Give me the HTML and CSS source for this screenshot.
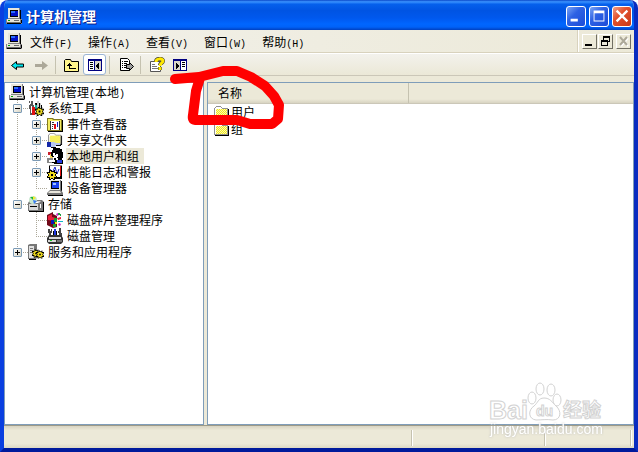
FILE: index.html
```html
<!DOCTYPE html>
<html lang="zh-CN">
<head>
	<meta charset="utf-8">
	<title>计算机管理</title>
	<link rel="stylesheet" href="styles.css">
</head>
<body>
	<!-- icons used more than once -->
	<svg class="defs" aria-hidden="true">
		<symbol id="computer" viewBox="0 0 16 16">
			<path fill="#848284" d="M2 0h12v11H2zM0 11h16v5H0z"/>
			<path fill="#e8e6dc" d="M2 0h11v10H2zM1 11h13v3H1z"/>
			<path fill="#000" d="M4 2h8v7H4zM14 2h1v9h-1zM1 15h14v1H1zM15 12h1v3h-1z"/>
			<path fill="#0010c8" d="M5 3h7v5H5z"/>
			<path fill="#2a6cff" d="M5 3h4v2H5z"/>
			<path fill="#6b6b6b" d="M8 12h5v1H8zM1 14h13v1H1z"/>
			<path fill="#00a000" d="M2 12h2v1H2z"/>
		</symbol>
		<symbol id="folder" viewBox="0 0 16 16">
			<path fill="#909090" d="M0 4h1V3h1V2h5v1h1v1h6v10H0z"/>
			<path fill="#000" d="M14 5h1v10H1v-1h13z"/>
			<path fill="#fff" d="M2 3h5v1h1v1h5v1H2v7H1V4h1z"/>
			<path fill="#f2ea1c" d="M2 5h11v8H2z"/>
			<path fill="none" stroke="#fdf9b0" stroke-dasharray="1 1" d="M2 5.500h11M3 6.500h10M2 7.500h11M3 8.500h10M2 9.500h11M3 10.500h10M2 11.500h11M3 12.500h10"/>
		</symbol>
		<symbol id="gear" viewBox="0 0 10 10">
			<path fill="#000" d="M3 0h2v1h2V0h1v2h2v2H9v2h1v2H8v2H6V9H4v1H2V8H0V6h1V4H0V2h2V1h1z"/>
			<path fill="#f0dc20" d="M3 1h1v1h3V1v2h2v1H8v2h1v1H7v2H6V8H4v1H3V7H1V6h1V4H1V3h2z"/>
			<path fill="#000" d="M4 4h2v2H4z"/>
		</symbol>
	</svg>

	<div class="window">
		<header class="titlebar">
			<svg class="icon"><use href="#computer"/></svg>
			<h1>计算机管理</h1>
			<button class="win" aria-label="最小化"><svg viewBox="0 0 20 20"><path fill="#fff" d="M4 13h8v3H4z"/></svg></button>
			<button class="win" aria-label="最大化"><svg viewBox="0 0 20 20"><path fill="#fff" fill-rule="evenodd" d="M4 4h12v12H4zM5 7v8h10V7z"/></svg></button>
			<button class="win close" aria-label="关闭"><svg viewBox="0 0 20 20"><path stroke="#fff" stroke-width="2.500" d="M4 4l12 12M16 4L4 16"/></svg></button>
		</header>

		<nav class="menubar">
			<svg class="icon"><use href="#computer"/></svg>
			<button>文件<span>(F)</span></button>
			<button>操作<span>(A)</span></button>
			<button>查看<span>(V)</span></button>
			<button>窗口<span>(W)</span></button>
			<button>帮助<span>(H)</span></button>
			<div class="mdi">
				<button aria-label="最小化子窗口"><svg viewBox="0 0 12 12"><path d="M2 9h7v2H2z"/></svg></button>
				<button aria-label="还原子窗口"><svg viewBox="0 0 12 12"><path fill-rule="evenodd" d="M4 1h7v6H9v4H2V5h2zM5 3v2h4v1h1V3zM3 7v3h5V7z"/></svg></button>
				<button class="off" aria-label="关闭子窗口" disabled><svg viewBox="0 0 12 12"><path stroke="#fff" stroke-width="2" d="M4 3l7 8M11 3l-7 8"/><path stroke="#aca899" stroke-width="2" d="M3 2l7 8M10 2l-7 8"/></svg></button>
			</div>
		</nav>

		<div class="toolbar">
			<button aria-label="后退"><svg class="icon" viewBox="0 0 16 16"><path fill="#00e8f0" stroke="#000" d="M1.500 8.500l5-4v2.500h7v3h-7v2.500z"/></svg></button>
			<button aria-label="前进" disabled><svg class="icon" viewBox="0 0 16 16"><path fill="#aca899" d="M15 8.500L9 4v3H2v3h7v3z"/></svg></button>
			<i class="sep"></i>
			<button aria-label="上移一级"><svg class="icon" viewBox="0 0 16 16"><path fill="#fff58c" stroke="#000" d="M.500 14.500v-11l1-1h5l1 2h7v10z"/><path fill="#000" d="M5 6h1v1h1v1h1v1H6v2h6v1H5V9H3V8h1V7h1z"/></svg></button>
			<button class="pressed" aria-label="显示/隐藏控制台树"><svg class="icon" viewBox="0 0 16 16"><path fill="#000080" d="M1 2h14v12H1z"/><path fill="#fff" d="M2 4h5v9H2z"/><path fill="#d8d4c8" d="M8 4h6v9H8z"/><path fill="#000" d="M3 5h3v1H3zM3 7h3v1H3zM3 9h3v1H3zM3 11h3v1H3zM12 5v7H11v-1h-1v-1H9V8h1V7h1V6h1z"/></svg></button>
			<i class="sep"></i>
			<button aria-label="导出列表"><svg class="icon" viewBox="0 0 16 16"><path fill="#fff" stroke="#000" d="M2.500 1.500h7l2 2v10h-9z"/><path fill="#000" d="M4 4h1v1H4zM6 4h4v1H6zM4 6h1v1H4zM6 6h3v1H6zM4 8h1v1H4zM6 8h3v1H6zM4 10h1v1H4zM6 10h3v1H6z"/><path fill="#9c9c9c" stroke="#000" d="M8.500 7.500h3v-2l4 4-4 4v-2h-3z"/></svg></button>
			<i class="sep"></i>
			<button aria-label="帮助"><svg class="icon" viewBox="0 0 16 16"><path fill="#fff" stroke="#555" d="M1.500 4.500h10v10h-10z"/><path fill="#777" d="M3 7h3v1H3zM3 9h5v1H3zM3 11h6v1H3z"/><path fill="none" stroke="#333" stroke-width="4" d="M7 5c0-4 7-4 7-1 0 2-3 2-3 4M11 10v3"/><path fill="none" stroke="#ffe800" stroke-width="3" d="M7 5c0-4 7-4 7-1 0 2-3 2-3 5M11 10v3"/></svg></button>
			<button aria-label="显示/隐藏操作窗格"><svg class="icon" viewBox="0 0 16 16"><path fill="#000080" d="M1 2h14v12H1z"/><path fill="#fff" d="M9 4h5v9H9z"/><path fill="#d8d4c8" d="M2 4h6v9H2z"/><path fill="#000" d="M10 5h3v1h-3zM10 7h3v1h-3zM10 9h3v1h-3zM4 5v7h1v-1h1v-1h1V8H6V7H5V6H4z"/></svg></button>
		</div>

		<main class="panes">
			<section class="pane tree">
				<div class="row">
					<svg class="icon"><use href="#computer"/></svg>
					<span class="label">计算机管理<span class="half">(</span>本地<span class="half">)</span></span>
				</div>
				<div class="row">
					<i class="guide node"><button class="toggle minus" aria-label="折叠"></button></i>
					<svg class="icon" viewBox="0 0 16 16"><path fill="#555" d="M1 1h4v4h1v4H5v6H2V9H1V5h1V3H1z"/><path fill="#fff" d="M2 1h1v3H2zM3 6h1v7H3z"/><path fill="#e01010" d="M4 7h3v8H4z"/><path fill="#000" d="M7 3h5v2h2v4h-1v2H8z"/><path fill="#18b0a0" d="M7 5h3v6H7z"/><path fill="#ccc" d="M9 1h2v7H9zM12 3h1v5h-1z"/><use href="#gear" x="7" y="7" width="9" height="9"/></svg>
					<span class="label">系统工具</span>
				</div>
				<div class="row">
					<i class="guide"></i><i class="guide node"><button class="toggle plus" aria-label="展开"></button></i>
					<svg class="icon" viewBox="0 0 16 16"><path fill="#857c20" d="M0 2h6l1 1h8v12H0z"/><path fill="#f4ec60" d="M1 3h4l1 1h8v10H1z"/><path fill="#000" d="M15 4h1v12H1v-1h14z"/><path fill="#fff" d="M4 5h8v9H4z"/><path fill="#333" d="M3 5h1v9H3zM5 6h2v1H5zM5 8h2v1H5zM5 10h1v1H5zM5 12h1v1H5zM12 5h1v9h-1z"/><path fill="#e01010" d="M7 8h2v5H7z"/><path fill="#1020c8" d="M10 6h1v5h-1z"/></svg>
					<span class="label">事件查看器</span>
				</div>
				<div class="row">
					<i class="guide"></i><i class="guide node"><button class="toggle plus" aria-label="展开"></button></i>
					<svg class="icon" viewBox="0 0 16 16"><use href="#folder" x="1" y="-1" width="15" height="15"/><path fill="#1428a8" d="M0 10h4v5H0z"/><path fill="#b8c8f0" d="M4 10h3l2 1h4v2H9l-1 2H4z"/><path fill="#000" d="M4 15h5v1H4zM9 13h5v1H9z"/></svg>
					<span class="label">共享文件夹</span>
				</div>
				<div class="row selected">
					<i class="guide"></i><i class="guide node"><button class="toggle plus" aria-label="展开"></button></i>
					<svg class="icon" viewBox="0 0 16 16"><path fill="#888" d="M0 10h6v5H0z"/><path fill="#c8202c" d="M1 4h3v3H1z"/><path fill="#f4d858" d="M3 6h3v4H3z"/><path fill="#000" d="M6 0h7v1h2v3h1v6h-1v2h1v4H7v-1H5v-2h2V9H5V8H4V4h1V2h1z"/><path fill="#fff" d="M6 5h2v1h3v3h-1v1H7V8H6z"/><path fill="#000" d="M8 6h1v1H8z"/><path fill="#2038e0" d="M10 12h5v3h-5z"/><path fill="#fff" d="M2 12h6v2H2zM9 10h2v2H9z"/></svg>
					<span class="label">本地用户和组</span>
				</div>
				<div class="row">
					<i class="guide"></i><i class="guide node"><button class="toggle plus" aria-label="展开"></button></i>
					<svg class="icon" viewBox="0 0 16 16"><path fill="#000" d="M2 1h13v14H2z"/><path fill="#fff" d="M3 2h10v11H3z"/><path fill="none" stroke="#1020c8" d="M3 5l2 4 3-6 2 7 2-5"/><path fill="#e01010" d="M13 2h1v10h-1z"/><path fill="#888" d="M2 1h13v1H2z"/><use href="#gear" x="0" y="6" width="10" height="10"/></svg>
					<span class="label">性能日志和警报</span>
				</div>
				<div class="row">
					<i class="guide"></i><i class="guide node last"></i>
					<svg class="icon" viewBox="0 0 16 16"><path fill="#777" d="M3 0h11v11H3z"/><path fill="#e8e6dc" d="M3 0h10v10H3z"/><path fill="#000" d="M4 1h8v8H4zM14 1h1v10h-1z"/><path fill="#1840f0" d="M5 2h7v6H5z"/><path fill="#9cc0ff" d="M6 3h3v2H6z"/><path fill="#777" d="M0 13l3-3h11l2 3v2H0z"/><path fill="#e8e6dc" d="M3 11h10l1 2H1z"/><path fill="#000" d="M1 15h15v1H1z"/></svg>
					<span class="label">设备管理器</span>
				</div>
				<div class="row">
					<i class="guide node"><button class="toggle minus" aria-label="折叠"></button></i>
					<svg class="icon" viewBox="0 0 16 16"><path fill="#777" d="M0 7l2-3h12l2 2v9H0z"/><path fill="#d8d8d8" d="M1 8h9v6H1zM3 5h10l-2 2H2z"/><path fill="#000" d="M1 15h15v1H1zM2 10h7v1H2zM15 6h1v9h-1z"/><circle cx="5" cy="4" r="4" fill="#c8e8d0"/><path fill="#20b838" d="M5 4L2 1h3z"/><path fill="#f4ec30" d="M5 4V0l3 2z"/><path fill="#3878f0" d="M5 4l4 1-3 3z"/><path fill="#fff" d="M8 6h2v1H8zM12 8h1v4h-1z"/></svg>
					<span class="label">存储</span>
				</div>
				<div class="row">
					<i class="guide"></i><i class="guide node"></i>
					<svg class="icon" viewBox="0 0 16 16"><path fill="#700818" d="M0 3l6-3v2l4 2v11l-4 1-6-3z"/><path fill="#e8203c" d="M1 4l4-2v3l4 1-2 3-6-1z"/><path fill="#0818b8" d="M4 8h3v4H4z"/><path fill="#18a030" d="M7 6h3v4H7zM6 12h3v3H6z"/><path fill="#f4e020" d="M8 10h2v2H8z"/><path fill="#d020d0" d="M9 2l2-1 1 2-2 1zM11 12l2-1 1 2-2 1z"/><path fill="#20a040" d="M11 1h2v1h1v2h-1V3h-2z"/><path fill="#e8203c" d="M10 6l4-1v2l-3 1z"/><path fill="#10b8c8" d="M11 9h5v1h-5z"/></svg>
					<span class="label">磁盘碎片整理程序</span>
				</div>
				<div class="row">
					<i class="guide"></i><i class="guide node last"></i>
					<svg class="icon" viewBox="0 0 16 16"><path fill="#444" d="M1 1h2v2h1V1h1v4H4v3H2V5H1zM12 0h2v5h1v4h-3V5h-1V3h1z"/><path fill="#000" d="M6 3h4v5H6z"/><path fill="#2038e0" d="M7 1h2v6H7z"/><path fill="#333" d="M0 10l2-3h12l2 3v4l-2 2H2l-2-2z"/><path fill="#d8d8d8" d="M2 9h12v2H2zM1 12h8v2H1z"/><path fill="#18c828" d="M3 12h2v1H3z"/><path fill="#777" d="M10 12h5v2h-5z"/></svg>
					<span class="label">磁盘管理</span>
				</div>
				<div class="row">
					<i class="guide node last"><button class="toggle plus" aria-label="展开"></button></i>
					<svg class="icon" viewBox="0 0 16 16"><path fill="#777" d="M0 1l2-1h7v14l-1 1H0z"/><path fill="#e0e0e0" d="M1 2h5v12H1z"/><path fill="#777" d="M2 4h3v1H2zM2 6h3v1H2zM2 8h3v1H2z"/><path fill="#000" d="M1 15h7v1H1z"/><use href="#gear" x="4" y="5" width="8" height="9"/><use href="#gear" x="8" y="6" width="8" height="9"/></svg>
					<span class="label">服务和应用程序</span>
				</div>
			</section>

			<section class="pane">
				<table class="list">
					<thead>
						<tr><th>名称</th><th></th></tr>
					</thead>
					<tbody>
						<tr><td colspan="2"><svg class="icon"><use href="#folder"/></svg>用户</td></tr>
						<tr><td colspan="2"><svg class="icon"><use href="#folder"/></svg>组</td></tr>
					</tbody>
				</table>
			</section>
		</main>

		<footer class="statusbar">
			<span class="cell main"></span>
			<span class="cell"></span>
			<span class="cell short"></span>
		</footer>

		<!-- hand-drawn mark round the user folder -->
		<svg class="mark" viewBox="0 0 120 70" aria-hidden="true">
			<path d="M10 17L34 15 58 9H72L86 15 100 24 109 34 114 43 113 57 107 62H85L72 58H30Q27 58 28 53L31 29 35 16"/>
		</svg>

		<svg class="watermark" viewBox="0 0 120 60">
			<g class="wm">
				<text class="big" x="1" y="39">Bai</text>
				<ellipse cx="44" cy="18" rx="4" ry="6"/>
				<ellipse cx="52" cy="9" rx="4" ry="6"/>
				<ellipse cx="63" cy="10" rx="4" ry="6"/>
				<ellipse cx="69" cy="20" rx="4" ry="6"/>
				<path d="M56 18c-6 0-6 5-10 8-6 4-6 13 2 14 6 0 10-1 17 0 8 0 9-9 3-14-4-4-6-8-12-8z"/>
				<text class="du" x="48" y="36">du</text>
				<text class="cn" x="75" y="37">经验</text>
				<text class="url" x="2" y="54">jingyan.baidu.com</text>
			</g>
		</svg>
	</div>
</body>
</html>
```

FILE: styles.css
```css
*
{
	box-sizing: border-box;
}

body
{
	margin: 0;
	font: 12px "Noto Sans CJK SC", "Liberation Sans", sans-serif;
	color: #000;
	background: #fff;
}

button
{
	padding: 0;
	border: none;
	background: none;
	font: inherit;
	color: inherit;
}

.defs
{
	display: none;
}

.icon
{
	display: block;
	flex: none;
	width: 16px;
	height: 16px;
}

.window
{
	position: relative;
	display: flex;
	flex-direction: column;
	height: 100vh;
	border: solid #0831d9;
	border-width: 0 4px 4px;
	border-color: #0a3fe0 #0a2cc0 #001a9c #0a3fe0;
	border-radius: 8px 8px 0 0;
	background: #ece9d8;
	overflow: hidden;
}

/* title bar */
.titlebar
{
	display: flex;
	align-items: center;
	gap: 3px;
	height: 30px;
	margin: 0 -4px;
	padding: 2px 6px 0;
	background: linear-gradient(#0a48c8 0, #3a93ff 6%, #0560ec 14%, #0054e3 35%, #0058ee 60%, #0066ff 80%, #0062f8 90%, #0040c0 100%);
}

h1
{
	flex: 1;
	margin: 0 0 0 1px;
	font-size: 14px;
	line-height: 20px;
	color: #fff;
	text-shadow: 1px 1px #0a1883;
}

.win
{
	width: 20px;
	height: 21px;
	border: 1px solid #fff;
	border-radius: 3px;
	background: linear-gradient(135deg, #7ba5f5, #2e62e4 40%, #1c4bd8);
}

.win svg
{
	display: block;
	width: 18px;
	height: 18px;
}

.close
{
	background: linear-gradient(135deg, #f0a088, #e2502c 40%, #c8391a);
}

/* menus */
.menubar
{
	display: flex;
	align-items: center;
	gap: 16px;
	height: 23px;
	padding-left: 2px;
	border-bottom: 1px solid #d8d2bd;
	background: linear-gradient(90deg, #f2f1ea, #ece9d8);
}

.menubar .icon
{
	margin-right: -8px;
}

.menubar span, .half
{
	font-family: "Liberation Mono", monospace;
	font-size: 10px;
}

.mdi
{
	display: flex;
	align-items: center;
	gap: 1px;
	align-self: stretch;
	margin-left: auto;
	padding: 0 3px;
	border-left: 1px solid #fff;
	box-shadow: -1px 0 #d8d2bd;
}

.mdi button
{
	width: 15px;
	height: 15px;
	border: 1px solid;
	border-color: #fff #716f64 #716f64 #fff;
	background: #ece9d8;
}

.mdi svg
{
	display: block;
	width: 12px;
	height: 12px;
}

.mdi .off
{
	margin-left: 2px;
}

/* toolbar */
.toolbar
{
	display: flex;
	align-items: center;
	height: 23px;
	border-top: 1px solid #fff;
	border-bottom: 1px solid #cbc7b8;
	background: linear-gradient(#f3f2ec, #ebe8d7);
	padding-left: 2px;
}

.toolbar button
{
	display: grid;
	place-items: center;
	width: 23px;
	height: 21px;
}

.sep
{
	width: 1px;
	height: 18px;
	margin: 0 4px 0 3px;
	background: #c5c2b0;
}

.toolbar .pressed
{
	border: 1px solid #9ab4d4;
	border-radius: 3px;
	background: #fff;
}

/* panes */
.panes
{
	display: flex;
	flex: 1;
	gap: 3px;
	min-height: 0;
	padding-top: 6px;
}

.pane
{
	flex: 1;
	border: 1px solid #7f9db9;
	background: #fff;
	overflow: hidden;
}

.tree
{
	flex: 0 0 200px;
	padding: 1px 0 0 4px;
}

.row
{
	display: flex;
	height: 16px;
}

.label
{
	margin-left: 3px;
	padding: 0 1px;
	line-height: 16px;
	white-space: nowrap;
}

.selected .label
{
	padding-right: 5px;
	background: #ece9d8;
}

.guide
{
	display: flex;
	align-items: center;
	flex: none;
	width: 19px;
	padding-left: 4px;
	background: repeating-linear-gradient(#aca899 0 1px, transparent 1px 2px) 8px 0 / 1px 16px no-repeat;
}

.node
{
	background: repeating-linear-gradient(#aca899 0 1px, transparent 1px 2px) 8px 0 / 1px 16px no-repeat,
		repeating-linear-gradient(90deg, #aca899 0 1px, transparent 1px 2px) 8px 8px / 11px 1px no-repeat;
}

.last
{
	background-size: 1px 8px, 11px 1px;
}

.toggle
{
	width: 9px;
	height: 9px;
	border: 1px solid #7b9ab5;
	border-radius: 1px;
}

.minus
{
	background: linear-gradient(#000, #000) center / 5px 1px no-repeat, linear-gradient(135deg, #fff, #d8d4c4);
}

.plus
{
	background: linear-gradient(#000, #000) center / 5px 1px no-repeat,
		linear-gradient(#000, #000) center / 1px 5px no-repeat, linear-gradient(135deg, #fff, #d8d4c4);
}

.list
{
	width: 100%;
	border-collapse: collapse;
}

.list th
{
	height: 20px;
	padding: 0 10px;
	border-bottom: 1px solid #cbc7b8;
	background: linear-gradient(#ece9d8 80%, #d8d4c2);
	font-weight: normal;
	line-height: 18px;
	text-align: left;
}

.list th:first-child
{
	width: 200px;
	border-right: 1px solid #c5c2b0;
}

.list td
{
	height: 17px;
	padding: 0 0 0 6px;
	line-height: 16px;
}

.list .icon
{
	display: inline-block;
	margin-right: 1px;
	vertical-align: top;
}

/* status bar */
.statusbar
{
	display: flex;
	gap: 2px;
	height: 23px;
	padding: 4px 2px 2px 0;
	border-top: 1px solid #9d9a87;
	background: linear-gradient(#d8d4c2, #ece9d8 20%, #ece9d8 80%, #dcd8c4);
}

.cell
{
	flex: 0 0 131px;
	border-right: 1px solid #fff;
	box-shadow: inset -1px 0 #c5c2b0;
}

.main
{
	flex: 1;
}

.short
{
	flex-basis: 84px;
}

/* overlays */
.mark
{
	position: absolute;
	left: 161px;
	top: 62px;
	width: 120px;
	height: 70px;
	fill: none;
	stroke: #f00;
	stroke-width: 10px;
	stroke-linecap: round;
	stroke-linejoin: round;
}

.watermark
{
	position: absolute;
	right: 26px;
	bottom: 8px;
	width: 120px;
	height: 60px;
}

.wm
{
	fill: #fff;
	fill-opacity: .7;
	stroke: #d2d2d2;
	stroke-width: 1px;
	font-family: "Liberation Sans", "Noto Sans CJK SC", sans-serif;
}

.big
{
	font-size: 25px;
	font-weight: bold;
}

.du
{
	font-size: 14px;
	font-weight: bold;
}

.cn
{
	font-size: 19px;
	font-weight: bold;
}

.url
{
	font-size: 14px;
	stroke-width: 0;
	fill: #fff;
	fill-opacity: 1;
	filter: drop-shadow(0 0 1px #bbb);
}
```
